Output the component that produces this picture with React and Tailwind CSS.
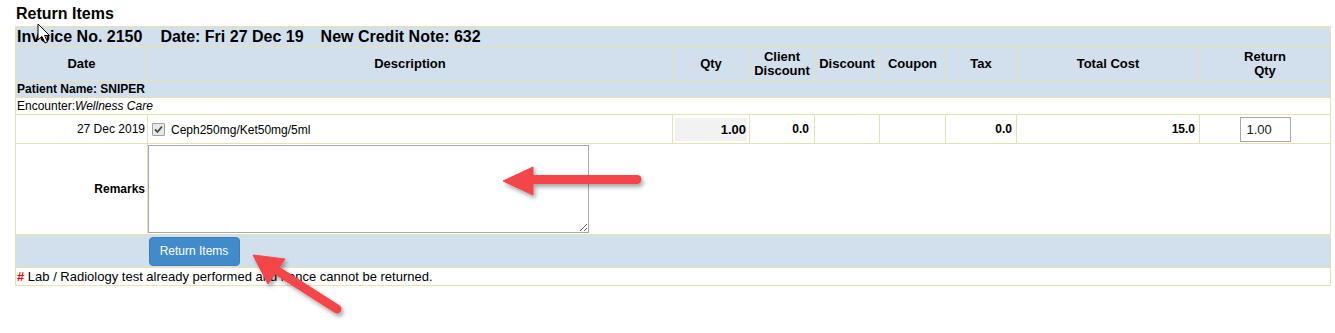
import React from 'react'

const bd = 'border border-[#e6e2b6]'

function Arrows() {
    return (
        <svg className="absolute left-0 top-0 pointer-events-none" width="1335" height="333">
            <defs>
                <filter id="sh" x="-20%" y="-40%" width="140%" height="180%">
                    <feDropShadow dx="2" dy="3" stdDeviation="2" floodColor="#000" floodOpacity="0.35" />
                </filter>
            </defs>
            <g filter="url(#sh)" fill="#f4444a" stroke="#f4444a">
                {/* remarks arrow */}
                <line x1="531" y1="179.5" x2="637" y2="179.5" strokeWidth="9" strokeLinecap="round" />
                <polygon points="503,181 533,167 533,195" strokeWidth="1" strokeLinejoin="round" />
                {/* button arrow */}
                <line x1="276" y1="270" x2="337" y2="309" strokeWidth="9" strokeLinecap="round" />
                <polygon points="253,255 285,259 268,284" strokeWidth="1" strokeLinejoin="round" />
            </g>
            {/* mouse cursor */}
            <path d="M38 24 L38 40 L42 36.5 L45 43 L47.5 42 L44.6 35.5 L49.5 35.5 Z" fill="#fff" stroke="#000" strokeWidth="1" strokeLinejoin="round" />
        </svg>
    )
}

function CheckMark() {
    return (
        <span className="w-[13px] h-[13px] shrink-0 border border-[#a0a0a0] bg-[#e8e8e8] rounded-[1px] flex items-center justify-center">
            <svg width="9" height="9" viewBox="0 0 9 9">
                <path d="M1 4.5 L3.5 7 L8 1.5" fill="none" stroke="#4a4a4a" strokeWidth="1.8" />
            </svg>
        </span>
    )
}

export default function App() {
    return (
        <div className="relative w-[1335px] h-[333px] bg-white text-black font-['Liberation_Sans',Arial,sans-serif]">
            <div className="pl-[16px] pt-[5px] h-[26px] text-[16px] leading-[18px] font-bold">Return Items</div>

            <table className="ml-[15px] w-[1315px] table-fixed border-collapse border border-[#e3dfb0] text-[12px] leading-[14px]">
                <colgroup>
                    <col className="w-[132px]" />
                    <col className="w-[525px]" />
                    <col className="w-[77px]" />
                    <col className="w-[65px]" />
                    <col className="w-[65px]" />
                    <col className="w-[66px]" />
                    <col className="w-[71px]" />
                    <col className="w-[183px]" />
                    <col className="w-[131px]" />
                </colgroup>
                <tbody>
                    <tr className="bg-[#d1e0ec]">
                        <td colSpan={9} className={`${bd} h-[21px] px-[1px] py-0 text-[16px] leading-[18px] font-bold`}>
                            <span>Invoice No. 2150</span>
                            <span className="ml-[18px]">Date: Fri 27 Dec 19</span>
                            <span className="ml-[17px]">New Credit Note: 632</span>
                        </td>
                    </tr>
                    <tr className="bg-[#d1e0ec] text-[13px] font-bold text-center">
                        <td className={`${bd} h-[33px] p-0`}>Date</td>
                        <td className={`${bd} p-0`}>Description</td>
                        <td className={`${bd} p-0`}>Qty</td>
                        <td className={`${bd} p-0`}>Client<br />Discount</td>
                        <td className={`${bd} p-0`}>Discount</td>
                        <td className={`${bd} p-0`}>Coupon</td>
                        <td className={`${bd} p-0`}>Tax</td>
                        <td className={`${bd} p-0`}>Total Cost</td>
                        <td className={`${bd} p-0`}>Return<br />Qty</td>
                    </tr>
                    <tr className="bg-[#d1e0ec]">
                        <td colSpan={9} className={`${bd} h-[17px] px-[1px] py-0 font-bold`}>Patient Name: SNIPER</td>
                    </tr>
                    <tr>
                        <td colSpan={9} className={`${bd} h-[17px] px-[1px] py-0`}>
                            Encounter:<i>Wellness Care</i>
                        </td>
                    </tr>
                    <tr>
                        <td className={`${bd} h-[29px] pr-[2px] py-0 text-right`}>27 Dec 2019</td>
                        <td className={`${bd} px-[4px] py-0`}>
                            <div className="flex items-center gap-[6px]">
                                <CheckMark />
                                <span className="mt-[2px]">Ceph250mg/Ket50mg/5ml</span>
                            </div>
                        </td>
                        <td className={`${bd} px-[2px] py-0`}>
                            <div className="h-[23px] bg-[#f2f2f2] text-right text-[13px] leading-[23px] font-bold pr-[1px]">1.00</div>
                        </td>
                        <td className={`${bd} pr-[5px] py-0 text-right font-bold`}>0.0</td>
                        <td className={`${bd} p-0`}></td>
                        <td className={`${bd} p-0`}></td>
                        <td className={`${bd} pr-[4px] py-0 text-right font-bold`}>0.0</td>
                        <td className={`${bd} pr-[4px] py-0 text-right font-bold`}>15.0</td>
                        <td className={`${bd} p-0 text-center`}>
                            <input readOnly value="1.00" className="w-[51px] h-[25px] border border-[#a9a9a9] px-[6px] text-[13px] text-[#1a1a1a] outline-none" />
                        </td>
                    </tr>
                    <tr>
                        <td className={`${bd} h-[91px] pr-[2px] py-0 text-right font-bold`}>Remarks</td>
                        <td colSpan={8} className={`${bd} px-0 py-0 align-middle`}>
                            <textarea className="block w-[441px] h-[88px] border border-[#a9a9a9] m-0 p-[2px] text-[12px]"></textarea>
                        </td>
                    </tr>
                    <tr className="bg-[#d1e0ec]">
                        <td className="border-y border-l border-[#e6e2b6] h-[33px] p-0"></td>
                        <td colSpan={8} className="border-y border-r border-[#e6e2b6] p-0">
                            <button className="ml-[1px] w-[91px] h-[29px] rounded-[4px] bg-[#428bca] border border-[#3a7fbd] text-white text-[12px]">Return Items</button>
                        </td>
                    </tr>
                    <tr>
                        <td colSpan={9} className={`${bd} h-[18px] px-[1px] py-0 text-[13px] leading-[15px]`}>
                            <span className="text-[#ff0000] font-bold">#</span> Lab / Radiology test already performed and hence cannot be returned.
                        </td>
                    </tr>
                </tbody>
            </table>

            <Arrows />
        </div>
    )
}
